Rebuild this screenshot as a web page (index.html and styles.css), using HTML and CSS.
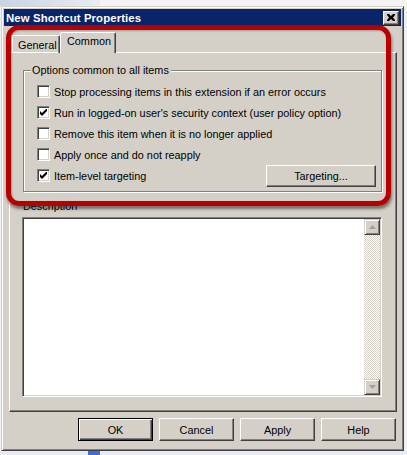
FILE: index.html
```html
<!DOCTYPE html>
<html>
<head>
<meta charset="utf-8">
<link rel="stylesheet" href="styles.css">
</head>
<body>
<div class="backdrop-top"></div>
<div class="window">
  <div class="titlebar">
    <span class="title">New Shortcut Properties</span>
    <div class="close">
      <svg width="8" height="7" viewBox="0 0 8 7"><path d="M0 0h2l2 2 2-2h2v1L6 3.5 8 6v1H6L4 5 2 7H0V6l2-2.5L0 1z" fill="#000"/></svg>
    </div>
  </div>
  <div class="content">
    <div class="tabs">
      <div class="tab">General</div>
      <div class="tab active">Common</div>
    </div>
    <div class="panel">
      <div class="group">
        <span class="legend">Options common to all items</span>
        <div class="row"><span class="cb"></span><span>Stop processing items in this extension if an error occurs</span></div>
        <div class="row"><span class="cb"><svg width="7" height="7" viewBox="0 0 7 7"><path d="M0 2v3l2 2 5-5V-1L2 4z" fill="#000"/></svg></span><span>Run in logged-on user's security context (user policy option)</span></div>
        <div class="row"><span class="cb"></span><span>Remove this item when it is no longer applied</span></div>
        <div class="row"><span class="cb"></span><span>Apply once and do not reapply</span></div>
        <div class="row"><span class="cb"><svg width="7" height="7" viewBox="0 0 7 7"><path d="M0 2v3l2 2 5-5V-1L2 4z" fill="#000"/></svg></span><span>Item-level targeting</span><span class="btn targeting">Targeting...</span></div>
      </div>
      <div class="desc-label">Description</div>
      <div class="textbox">
        <div class="text-area"></div>
        <div class="scrollbar">
          <div class="sbtn"><svg width="7" height="4" viewBox="0 0 7 4"><path d="M3.5 0L7 4H0z" fill="#a0a0a0"/></svg></div>
          <div class="track"></div>
          <div class="sbtn"><svg width="7" height="4" viewBox="0 0 7 4"><path d="M0 0h7L3.5 4z" fill="#a0a0a0"/></svg></div>
        </div>
      </div>
    </div>
    <div class="buttons">
      <span class="btn default">OK</span>
      <span class="btn">Cancel</span>
      <span class="btn">Apply</span>
      <span class="btn">Help</span>
    </div>
  </div>
  <div class="highlight"></div>
</div>
<div class="backdrop-bottom"><span class="blue"></span></div>
</body>
</html>
```

FILE: styles.css
```css
html, body {
  margin: 0;
  padding: 0;
}
body {
  width: 407px;
  height: 455px;
  background: #eef0f2;
  font-family: "Liberation Sans", Arial, sans-serif;
  font-size: 10.85px;
  color: #000;
  overflow: hidden;
}
.backdrop-top {
  height: 6px;
  background: linear-gradient(90deg, #c9d3e6 0, #e9edf3 100px, #f4f4f4 100px);
}
.window {
  position: relative;
  margin-left: 1px;
  width: 403px;
  height: 445px;
  box-sizing: border-box;
  background: #d4d0c8;
  border: 1px solid;
  border-color: #d4d0c8 #404040 #404040 #d4d0c8;
  box-shadow: inset 1px 1px 0 #fff, inset -1px -1px 0 #808080;
  padding: 2px;
}
.titlebar {
  height: 17px;
  background: #0a246a;
  display: flex;
  align-items: center;
  justify-content: space-between;
  padding: 0 2px 0 2px;
}
.title {
  color: #fff;
  font-weight: bold;
  font-size: 11.4px;
  letter-spacing: 0.1px;
}
.close {
  width: 16px;
  height: 14px;
  box-sizing: border-box;
  background: #d4d0c8;
  border: 1px solid;
  border-color: #fff #404040 #404040 #fff;
  box-shadow: inset -1px -1px 0 #808080;
  display: flex;
  align-items: center;
  justify-content: center;
}
.content {
  padding: 7px 3px 0 5px;
}
.tabs {
  display: flex;
  align-items: flex-end;
  padding-left: 3px;
  height: 20px;
  position: relative;
  z-index: 1;
  margin-bottom: -1px;
}
.tab {
  height: 18px;
  box-sizing: border-box;
  border: 1px solid;
  border-bottom: none;
  border-color: #fff #404040 transparent #fff;
  box-shadow: inset -1px 0 0 #808080;
  border-radius: 2px 2px 0 0;
  padding: 3px 6px 0 5px;
  width: 48px;
}
.tab.active {
  height: 21px;
  width: 56px;
  background: #d4d0c8;
  padding: 2px 6px 0 6px;
  border-left-color: #fff;
}
.panel {
  height: 360px;
  box-sizing: border-box;
  border: 1px solid;
  border-color: #fff #404040 #404040 #fff;
  box-shadow: inset -1px -1px 0 #808080;
  padding: 17px 14px 0 13px;
  margin-right: 1px;
}
.group {
  position: relative;
  border: 1px solid #808080;
  box-shadow: inset 1px 1px 0 #fff, 1px 1px 0 #fff;
  padding: 10px 5px 5px 13px;
}
.legend {
  position: absolute;
  top: -7px;
  left: 7px;
  background: #d4d0c8;
  padding: 0 2px 0 1px;
  line-height: 13px;
}
.row {
  display: flex;
  align-items: center;
  height: 21px;
}
.cb {
  width: 13px;
  height: 13px;
  box-sizing: border-box;
  background: #fff;
  border: 1px solid;
  border-color: #808080 #fff #fff #808080;
  box-shadow: inset 1px 1px 0 #404040, inset -1px -1px 0 #d4d0c8;
  margin-right: 4px;
  display: flex;
  align-items: center;
  justify-content: center;
  flex: none;
}
.btn {
  display: flex;
  align-items: center;
  justify-content: center;
  box-sizing: border-box;
  width: 75px;
  height: 23px;
  border: 1px solid;
  border-color: #fff #404040 #404040 #fff;
  box-shadow: inset -1px -1px 0 #808080;
  background: #d4d0c8;
}
.btn.targeting {
  margin-left: auto;
  width: 110px;
  height: 22px;
}
.btn.default {
  border: 1px solid #000;
  box-shadow: inset 1px 1px 0 #fff, inset -1px -1px 0 #404040, inset -2px -2px 0 #808080;
}
.desc-label {
  margin: 8px 0 4px 0;
  line-height: 13px;
  padding-left: 0;
}
.textbox {
  height: 180px;
  box-sizing: border-box;
  margin-right: 0;
  margin-left: -1px;
  border: 1px solid;
  border-color: #808080 #fff #fff #808080;
  box-shadow: inset 1px 1px 0 #404040, inset -1px -1px 0 #d4d0c8;
  padding: 1px 1px 1px 1px;
  display: flex;
  background: #fff;
}
.text-area {
  flex: 1;
}
.scrollbar {
  width: 16px;
  display: flex;
  flex-direction: column;
}
.sbtn {
  height: 16px;
  box-sizing: border-box;
  background: #d4d0c8;
  border: 1px solid;
  border-color: #d4d0c8 #404040 #404040 #d4d0c8;
  box-shadow: inset 1px 1px 0 #fff, inset -1px -1px 0 #808080;
  display: flex;
  align-items: center;
  justify-content: center;
}
.track {
  flex: 1;
  background-color: #fff;
  background-image: repeating-conic-gradient(#d4d0c8 0 25%, #fff 0 50%);
  background-size: 2px 2px;
}
.buttons {
  display: flex;
  justify-content: flex-end;
  gap: 6px;
  margin-top: 6px;
  margin-right: 2px;
}
.highlight {
  position: absolute;
  left: 4px;
  top: 18px;
  width: 385px;
  height: 181px;
  box-sizing: border-box;
  border: 5px solid #b80000;
  border-radius: 13px;
  box-shadow: 1px 3px 3px rgba(0,0,0,0.45), inset 1px 1px 2px rgba(0,0,0,0.25);
  pointer-events: none;
}
.backdrop-bottom {
  height: 4px;
  background: #e6ecf5;
  padding-left: 88px;
}
.blue {
  display: block;
  width: 12px;
  height: 4px;
  background: #3b6fd6;
}
```
